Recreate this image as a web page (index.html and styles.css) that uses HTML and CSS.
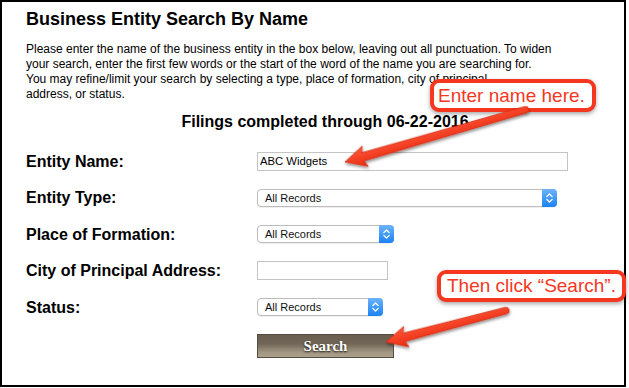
FILE: index.html
```html
<!DOCTYPE html>
<html lang="en">
<head>
<meta charset="utf-8">
<title>Business Entity Search By Name</title>
<link rel="stylesheet" href="styles.css">
</head>
<body>
<div class="page">
  <h1 class="title">Business Entity Search By Name</h1>
  <p class="intro">Please enter the name of the business entity in the box below, leaving out all punctuation. To widen<br>your search, enter the first few words or the start of the word of the name you are searching for.<br>You may refine/limit your search by selecting a type, place of formation, city of principal<br>address, or status.</p>
  <h2 class="filings">Filings completed through 06-22-2016</h2>
  <form class="form">
    <label class="label">Entity Name:</label>
    <div class="field"><input class="text text-name" type="text" value="ABC Widgets"></div>

    <label class="label">Entity Type:</label>
    <div class="field">
      <div class="select select-type"><span class="sel-text">All Records</span><span class="sel-btn"><svg width="15" height="18" viewBox="0 0 15 18"><polyline points="4.8,7.6 7.5,5 10.2,7.6" /><polyline points="4.8,10.4 7.5,13 10.2,10.4" /></svg></span></div>
    </div>

    <label class="label">Place of Formation:</label>
    <div class="field">
      <div class="select select-place"><span class="sel-text">All Records</span><span class="sel-btn"><svg width="15" height="18" viewBox="0 0 15 18"><polyline points="4.8,7.6 7.5,5 10.2,7.6" /><polyline points="4.8,10.4 7.5,13 10.2,10.4" /></svg></span></div>
    </div>

    <label class="label">City of Principal Address:</label>
    <div class="field"><input class="text text-city" type="text" value=""></div>

    <label class="label">Status:</label>
    <div class="field">
      <div class="select select-status"><span class="sel-text">All Records</span><span class="sel-btn"><svg width="15" height="18" viewBox="0 0 15 18"><polyline points="4.8,7.6 7.5,5 10.2,7.6" /><polyline points="4.8,10.4 7.5,13 10.2,10.4" /></svg></span></div>
    </div>

    <span class="label"></span>
    <div class="field"><button class="search" type="button">Search</button></div>
  </form>

  <div class="callout callout-enter">Enter name here.</div>
  <div class="callout callout-click">Then click “Search”.</div>

  <svg class="arrows" width="629" height="388" viewBox="0 0 629 388">
    <defs>
      <filter id="ashadow" x="-10%" y="-30%" width="120%" height="160%">
        <feDropShadow dx="0" dy="2" stdDeviation="1.4" flood-color="#000" flood-opacity="0.45"/>
      </filter>
      <linearGradient id="agrad" x1="0" y1="0" x2="0" y2="1">
        <stop offset="0" stop-color="#ff5a3c"/>
        <stop offset="1" stop-color="#e8290f"/>
      </linearGradient>
    </defs>
    <g filter="url(#ashadow)" transform="translate(345 162) rotate(-16.15)">
      <path class="arrow" d="M0 0 L21 -10.5 L18.5 -4.2 L188 -3.2 A3.2 3.2 0 0 1 188 3.2 L18.5 4.2 L21 10.5 Z"/>
    </g>
    <g filter="url(#ashadow)" transform="translate(386 342) rotate(-14.7)">
      <path class="arrow" d="M0 0 L21 -10.5 L18.5 -4.2 L124 -3.2 A3.2 3.2 0 0 1 124 3.2 L18.5 4.2 L21 10.5 Z"/>
    </g>
  </svg>
</div>
</body>
</html>
```
FILE: styles.css
```css
html, body {
  margin: 0;
  padding: 0;
  background: #fff;
}

body {
  font-family: "Liberation Sans", Arial, Helvetica, sans-serif;
  color: #000;
}

.page {
  position: relative;
  box-sizing: border-box;
  width: 626px;
  height: 387px;
  border: 2px solid #000;
  padding: 7px 0 0 24px;
}

.title {
  margin: 0;
  font-size: 18px;
  font-weight: bold;
  line-height: 21px;
}

.intro {
  margin: 12px 0 0;
  font-size: 12px;
  line-height: 15px;
}

.filings {
  margin: 11px 0 0;
  font-size: 16px;
  font-weight: bold;
  line-height: 18px;
  text-align: center;
}

.form {
  display: grid;
  grid-template-columns: 231px 1fr;
  grid-template-rows: repeat(5, 36.5px) 41.5px;
  align-items: center;
  margin: 12px 0 0;
}

.label {
  font-size: 16px;
  font-weight: bold;
  line-height: 19px;
}

.field {
  display: flex;
  align-items: center;
}

.text {
  box-sizing: border-box;
  height: 19px;
  margin: 0;
  padding: 0 2px;
  border: 1px solid #c4c4c4;
  background: #fff;
  font-family: "Liberation Sans", Arial, sans-serif;
  font-size: 11.3px;
  color: #000;
  outline: none;
}

.text-name { width: 311px; }
.text-city { width: 131px; }

.select {
  display: flex;
  box-sizing: border-box;
  height: 18px;
  border: 1px solid #bcbcbc;
  border-radius: 4px;
  background: #fff;
  box-shadow: 0 1px 1px rgba(0, 0, 0, 0.07);
  font-size: 11px;
}

.select-type { width: 300px; }
.select-place { width: 137px; }
.select-status { width: 126px; }

.sel-text {
  flex: 1;
  padding-left: 7px;
  line-height: 16px;
  color: #111;
}

.sel-btn {
  display: block;
  width: 15px;
  height: 18px;
  margin: -1px -1px -1px 0;
  border-radius: 0 4px 4px 0;
  background: linear-gradient(to bottom, #6cb4fb, #1b82f4);
}

.sel-btn svg {
  display: block;
}

.sel-btn polyline {
  fill: none;
  stroke: #fff;
  stroke-width: 1.3;
  stroke-linecap: round;
  stroke-linejoin: round;
}

.search {
  box-sizing: border-box;
  width: 137px;
  height: 24px;
  margin: 0;
  padding: 0;
  border: 1px solid #564c3f;
  background: linear-gradient(to bottom, #6a5e50 0%, #716556 40%, #8d8270 62%, #a49985 82%, #aba08c 100%);
  color: #fff;
  font-family: "Liberation Serif", "DejaVu Serif", serif;
  font-size: 15px;
  font-weight: bold;
  text-shadow: 0 1px 2px #1a120a;
  cursor: pointer;
}

.callout {
  position: absolute;
  box-sizing: border-box;
  border: 4px solid #f5371f;
  border-radius: 9px;
  background: #fff;
  box-shadow: 0 2px 4px rgba(0, 0, 0, 0.35);
  color: #f3381f;
  font-family: "Liberation Sans", Arial, sans-serif;
  font-size: 19px;
  white-space: nowrap;
}

.callout-enter {
  left: 428px;
  top: 77px;
  width: 166px;
  height: 33px;
  padding-left: 4px;
  line-height: 25px;
}

.callout-click {
  left: 435px;
  top: 268px;
  width: 189px;
  height: 32px;
  padding-left: 6px;
  line-height: 24px;
}

.arrows {
  position: absolute;
  left: -2px;
  top: -2px;
  pointer-events: none;
}

.arrow {
  fill: url(#agrad);
  stroke: #d0250c;
  stroke-width: 0.7;
}
```
